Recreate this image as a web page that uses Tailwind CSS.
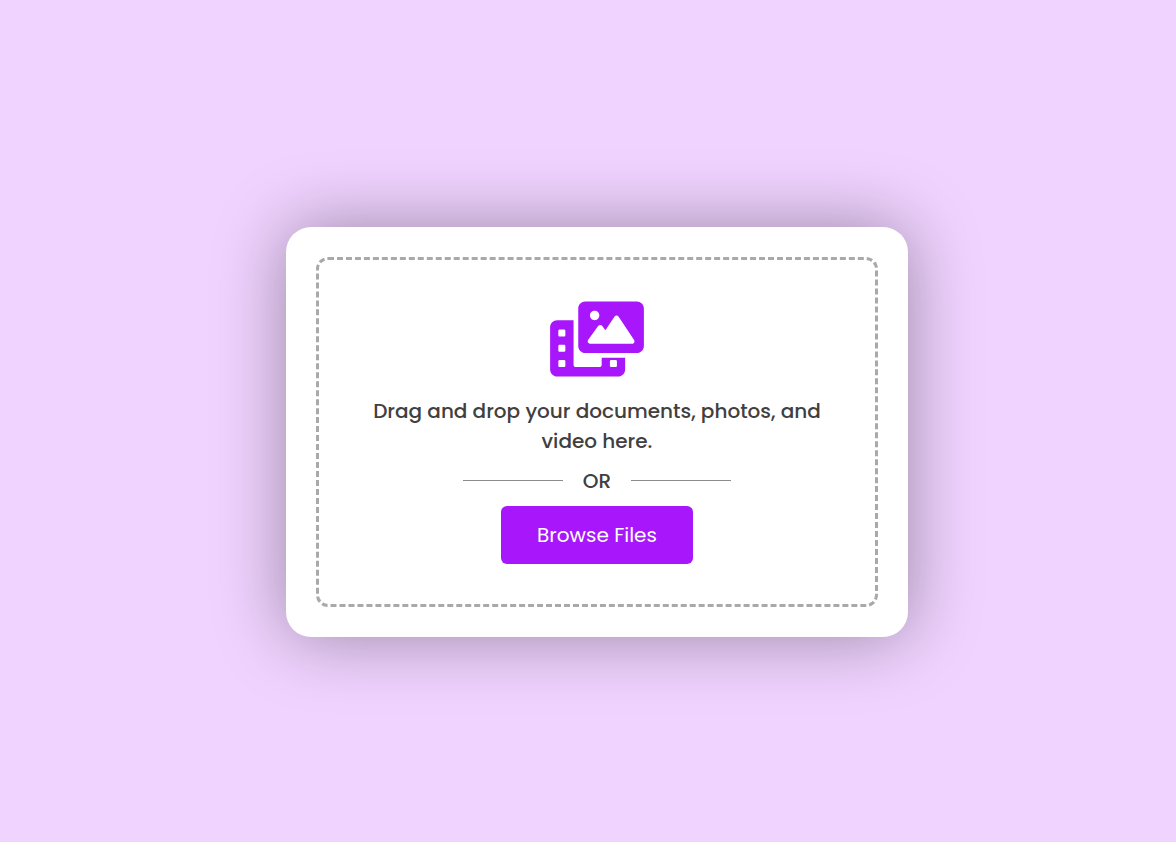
<!DOCTYPE html>
<html lang="en">
<head>
<meta charset="utf-8">
<meta name="viewport" content="width=device-width, initial-scale=1">
<title>Upload files</title>
<script src="https://cdn.jsdelivr.net/npm/@tailwindcss/browser@4"></script>
</head>
<body class="flex min-h-screen items-center justify-center bg-[#f0d3ff] pt-[22px] pl-[18px] font-['Poppins','Inter',sans-serif] text-xl leading-[30px] font-medium text-[#404040]">
  <main class="w-full max-w-[622px] rounded-[25px] bg-white p-[30px] shadow-[0_0_70px_rgba(0,0,0,0.36)]">
    <section class="flex flex-col items-center rounded-xl border-[3px] border-dashed border-[#a9a9a9] px-10 pt-[41px] pb-10">
      <svg class="h-[75px] w-[94px] overflow-visible fill-[#a816fb]" viewBox="0 -3 640 512" aria-hidden="true">
        <path fill-rule="evenodd" d="M352 432c0 8.8-7.2 16-16 16H176c-8.8 0-16-7.2-16-16V128H48C21.5 128 0 149.5 0 176v288c0 26.5 21.5 48 48 48h416c26.5 0 48-21.5 48-48V384H352zM104 439c0 5-4 9-9 9H65c-5 0-9-4-9-9v-30c0-5 4-9 9-9h30c5 0 9 4 9 9zM104 335c0 5-4 9-9 9H65c-5 0-9-4-9-9v-30c0-5 4-9 9-9h30c5 0 9 4 9 9zM104 231c0 5-4 9-9 9H65c-5 0-9-4-9-9v-30c0-5 4-9 9-9h30c5 0 9 4 9 9zM408 409c0-5 4-9 9-9h30c5 0 9 4 9 9v30c0 5-4 9-9 9h-30c-5 0-9-4-9-9zM592 0H240C213.500 0 192 21.500 192 48v256c0 26.500 21.500 48 48 48h352c26.500 0 48-21.500 48-48V48C640 21.500 618.500 0 592 0zM304 64c17.700 0 32 14.300 32 32s-14.300 32-32 32-32-14.300-32-32 14.300-32 32-32zM574.100 279.600C571.300 284.800 565.900 288 560 288H272c-6 0-11.500-3.400-14.300-8.700-2.700-5.400-2.200-11.900 1.400-16.700l70-96C332.100 162.400 336.900 160 342 160s9.900 2.400 12.900 6.600l22.400 30.600 62.700-94.100C443 98.700 448 96 453.300 96s10.300 2.700 13.300 7.100l106.700 160C576.600 268 576.900 274.300 574.100 279.600z"/>
      </svg>
      <p class="mt-5 text-center">Drag and drop your documents, photos, and video here.</p>
      <div class="mt-2.5 flex items-center gap-5">
        <span class="mb-0.5 h-px w-[100px] bg-[#8c8c8c]"></span>
        <span>OR</span>
        <span class="mb-0.5 h-px w-[100px] bg-[#8c8c8c]"></span>
      </div>
      <button type="button" class="mt-2.5 h-[58px] w-48 cursor-pointer rounded-md bg-[#a816fb] font-normal text-white">Browse Files</button>
    </section>
  </main>
</body>
</html>
